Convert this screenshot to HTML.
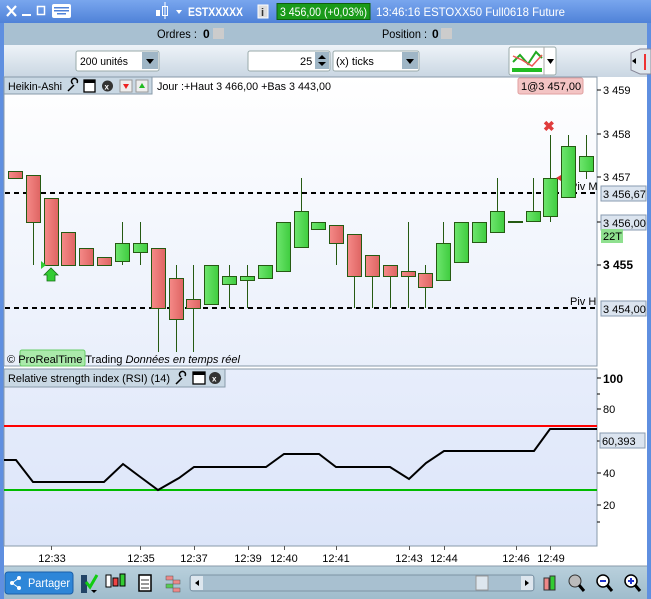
<!DOCTYPE html>
<html><head><meta charset="utf-8"><style>
*{margin:0;padding:0;box-sizing:border-box}
body{width:651px;height:599px;overflow:hidden;font-family:"Liberation Sans",sans-serif;font-size:11px;background:#fff;position:relative}
.abs{position:absolute}
</style></head><body>
<svg class="abs" style="left:0;top:0" width="651" height="599" xmlns="http://www.w3.org/2000/svg" font-family="Liberation Sans, sans-serif">
<defs>
<linearGradient id="top" x1="0" y1="0" x2="0" y2="1"><stop offset="0" stop-color="#79a6ee"/><stop offset="1" stop-color="#4f82d8"/></linearGradient>
<linearGradient id="r3" x1="0" y1="0" x2="0" y2="1"><stop offset="0" stop-color="#eef3f8"/><stop offset="1" stop-color="#c9d6e2"/></linearGradient>
<linearGradient id="plot" x1="0" y1="0" x2="0" y2="1"><stop offset="0" stop-color="#ffffff"/><stop offset="1" stop-color="#e9effb"/></linearGradient>
<linearGradient id="rsi" x1="0" y1="0" x2="0" y2="1"><stop offset="0" stop-color="#e7edfb"/><stop offset="1" stop-color="#dce5f9"/></linearGradient>
<linearGradient id="rc" x1="0" y1="0" x2="1" y2="0"><stop offset="0" stop-color="#f58a88"/><stop offset="1" stop-color="#de6462"/></linearGradient>
<linearGradient id="gc" x1="0" y1="0" x2="1" y2="0"><stop offset="0" stop-color="#6ee66e"/><stop offset="1" stop-color="#3fcc3f"/></linearGradient>
<linearGradient id="bot" x1="0" y1="0" x2="0" y2="1"><stop offset="0" stop-color="#b9d0dc"/><stop offset="1" stop-color="#9fbccc"/></linearGradient>
</defs>
<!-- top bar -->
<rect x="0" y="0" width="651" height="23" fill="url(#top)"/>
<path d="M7 6 L16 16 M16 6 L7 16" stroke="#fff" stroke-width="2.2"/>
<rect x="22" y="14" width="9" height="2" fill="#fff"/>
<rect x="37.5" y="6.5" width="7" height="8" fill="none" stroke="#fff" stroke-width="1.5"/>
<rect x="52" y="4" width="19" height="14" rx="2" fill="#fff"/>
<g fill="#4f82d8"><rect x="54" y="7" width="15" height="1.5"/><rect x="54" y="10" width="15" height="1.5"/><rect x="57" y="13" width="9" height="1.5"/></g>
<rect x="156" y="10" width="4" height="6" fill="#fff"/><rect x="162.5" y="6.5" width="5" height="9" fill="none" stroke="#fff"/><line x1="165" y1="2" x2="165" y2="19" stroke="#fff"/>
<path d="M176 10 L182 10 L179 14Z" fill="#fff"/>
<text x="188" y="16" font-size="12" font-weight="bold" fill="#fff" textLength="55" lengthAdjust="spacingAndGlyphs">ESTXXXXX</text>
<rect x="258" y="5" width="10" height="13" fill="#ddd" stroke="#fff"/><text x="261" y="16" font-size="11" font-weight="bold" fill="#333">i</text>
<rect x="277" y="3.5" width="93" height="16" fill="#1a9a1a" stroke="#0d5f0d"/>
<text x="280" y="16" font-size="12" fill="#fff" textLength="87" lengthAdjust="spacingAndGlyphs">3 456,00 (+0,03%)</text>
<text x="376" y="16" font-size="12" fill="#fff" textLength="189" lengthAdjust="spacingAndGlyphs">13:46:16 ESTOXX50 Full0618 Future</text>
<!-- row2 -->
<rect x="0" y="23" width="651" height="22" fill="#a8c0d1"/>
<rect x="0" y="23" width="4" height="576" fill="#5f8fe0"/>
<rect x="647" y="23" width="4" height="576" fill="#5f8fe0"/>
<text x="157" y="38" font-size="12" fill="#000" textLength="40" lengthAdjust="spacingAndGlyphs">Ordres :</text><text x="203" y="38" font-size="12" font-weight="bold">0</text>
<rect x="213" y="28" width="11" height="11" fill="#ccc"/>
<text x="382" y="38" font-size="12" fill="#000" textLength="45" lengthAdjust="spacingAndGlyphs">Position :</text><text x="432" y="38" font-size="12" font-weight="bold">0</text>
<rect x="441" y="28" width="11" height="11" fill="#ccc"/>
<!-- row3 -->
<rect x="4" y="45" width="643" height="32" fill="url(#r3)"/>
<rect x="76" y="51" width="83" height="20" rx="2" fill="#fff" stroke="#9aa"/>
<text x="80" y="65" font-size="11" textLength="48" lengthAdjust="spacingAndGlyphs">200 unités</text>
<rect x="142" y="52" width="16" height="17" fill="#9fb6c6"/><path d="M146 59 L154 59 L150 64Z" fill="#000"/>
<rect x="248" y="51" width="82" height="20" rx="2" fill="#fff" stroke="#9aa"/>
<text x="300" y="65" font-size="11">25</text>
<rect x="315" y="52" width="14" height="17" fill="#9fb6c6"/><path d="M318 59 L326 59 L322 55Z M318 62 L326 62 L322 66Z" fill="#000"/>
<rect x="333" y="51" width="86" height="20" rx="2" fill="#fff" stroke="#9aa"/>
<text x="336" y="65" font-size="11">(x) ticks</text>
<rect x="402" y="52" width="16" height="17" fill="#9fb6c6"/><path d="M406 59 L414 59 L410 64Z" fill="#000"/>
<rect x="509" y="47" width="47" height="28" rx="2" fill="#fff" stroke="#9aa"/>
<line x1="544" y1="47" x2="544" y2="75" stroke="#aaa"/>
<path d="M513 62 L520 55 L528 64 L536 52 L542 58" stroke="#2a2" stroke-width="2" fill="none"/>
<path d="M513 56 L522 60 L532 66 L542 55" stroke="#e55" stroke-width="1.5" fill="none"/>
<rect x="512" y="68" width="30" height="4" fill="#2b2"/>
<path d="M547 59 L554 59 L550.5 64Z" fill="#000"/>
<path d="M640 49 L631 53 L631 70 L640 74 L651 74 L651 49Z" fill="#dfe7ee" stroke="#889"/>
<path d="M645 54 L645 70" stroke="#e33" stroke-width="2"/><path d="M632 61 L636 58 L636 64Z" fill="#000"/>
<!-- main plot -->
<rect x="4" y="77" width="593" height="289" fill="url(#plot)" stroke="#889aaa"/>
<rect x="597" y="77" width="50" height="289" fill="#fff"/>
<line x1="597" y1="77" x2="597" y2="366" stroke="#889aaa"/>
<rect x="4" y="77" width="148" height="17" fill="#c9d8e4" stroke="#889aaa"/>
<text x="8" y="90" font-size="11" textLength="54" lengthAdjust="spacingAndGlyphs">Heikin-Ashi</text>
<path d="M68 91 L74 85 M73 84 a3 3 0 1 1 4 -1" stroke="#000" stroke-width="1.5" fill="none"/>
<rect x="84" y="80" width="11" height="12" fill="#fff" stroke="#000" stroke-width="1.3"/><rect x="84" y="80" width="11" height="3" fill="#000"/>
<circle cx="107.5" cy="86" r="5.5" fill="#333"/><text x="104.5" y="89.5" font-size="8" fill="#fff" font-weight="bold">x</text>
<rect x="120" y="80" width="12" height="12" fill="#eee" stroke="#999"/><path d="M123 84 L129 84 L126 89Z" fill="#e22"/>
<rect x="136" y="80" width="12" height="12" fill="#eee" stroke="#999"/><path d="M139 88 L145 88 L142 83Z" fill="#2b2"/>
<text x="157" y="90" font-size="11" textLength="174" lengthAdjust="spacingAndGlyphs">Jour :+Haut 3 466,00 +Bas 3 443,00</text>
<rect x="518" y="78" width="65" height="16" rx="2" fill="#f3c4c4" stroke="#e0a0a0"/>
<text x="521" y="90" font-size="11">1@3 457,00</text>
<!-- price axis -->
<g font-size="11" fill="#000">
<line x1="597" y1="90" x2="601" y2="90" stroke="#000"/><text x="603" y="94">3 459</text>
<line x1="597" y1="134" x2="601" y2="134" stroke="#000"/><text x="603" y="138">3 458</text>
<line x1="597" y1="177" x2="601" y2="177" stroke="#000"/><text x="603" y="181">3 457</text>
<line x1="597" y1="222" x2="601" y2="222" stroke="#000"/>
<line x1="597" y1="265" x2="601" y2="265" stroke="#000"/><text x="603" y="269" font-weight="bold" font-size="12">3 455</text>
</g>
<rect x="601" y="186" width="45" height="15" fill="#dbe4ef" stroke="#8a9bb0"/><text x="603" y="198" font-size="11">3 456,67</text>
<rect x="601" y="215" width="45" height="15" fill="#dbe4ef" stroke="#8a9bb0"/><text x="603" y="227" font-size="11">3 456,00</text>
<rect x="601" y="229" width="22" height="14" fill="#8fe08f"/><text x="603" y="240" font-size="11">22T</text>
<rect x="601" y="301" width="45" height="15" fill="#dbe4ef" stroke="#8a9bb0"/><text x="603" y="313" font-size="11">3 454,00</text>
<!-- dashed -->
<line x1="5" y1="193" x2="597" y2="193" stroke="#000" stroke-width="2" stroke-dasharray="5,4"/>
<line x1="5" y1="308" x2="597" y2="308" stroke="#000" stroke-width="2" stroke-dasharray="5,4"/>
<text x="570" y="190" font-size="11">Piv M</text>
<text x="570" y="305" font-size="11">Piv H</text>
<!-- candles -->
<g stroke="#255a12" stroke-width="1">
<line x1="33.5" y1="222" x2="33.5" y2="265"/>
<line x1="158.5" y1="308" x2="158.5" y2="352"/>
<line x1="176.5" y1="265" x2="176.5" y2="352"/>
<line x1="193.5" y1="265" x2="193.5" y2="352"/>
<line x1="122.5" y1="222" x2="122.5" y2="265"/>
<line x1="140.5" y1="222" x2="140.5" y2="265"/>
<line x1="229.5" y1="265" x2="229.5" y2="308"/>
<line x1="247.5" y1="265" x2="247.5" y2="308"/>
<line x1="301.5" y1="178" x2="301.5" y2="211"/>
<line x1="336.5" y1="225" x2="336.5" y2="265"/>
<line x1="354.5" y1="234" x2="354.5" y2="308"/>
<line x1="372.5" y1="255" x2="372.5" y2="308"/>
<line x1="390.5" y1="265" x2="390.5" y2="308"/>
<line x1="408.5" y1="222" x2="408.5" y2="308"/>
<line x1="425.5" y1="265" x2="425.5" y2="308"/>
<line x1="443.5" y1="222" x2="443.5" y2="243"/>
<line x1="497.5" y1="178" x2="497.5" y2="211"/>
<line x1="533.5" y1="178" x2="533.5" y2="222"/>
<line x1="550.5" y1="135" x2="550.5" y2="222"/>
<line x1="568.5" y1="135" x2="568.5" y2="146"/>
<line x1="586.5" y1="135" x2="586.5" y2="179"/>
</g>
<g stroke="#255a12" stroke-width="1" fill="url(#rc)">
<rect x="8.5" y="171.5" width="14" height="7"/>
<rect x="26.5" y="175.5" width="14" height="47"/>
<rect x="44.5" y="198.5" width="14" height="67"/>
<rect x="61.5" y="232.5" width="14" height="33"/>
<rect x="79.5" y="248.5" width="14" height="17"/>
<rect x="97.5" y="257.5" width="14" height="8"/>
<rect x="151.5" y="248.5" width="14" height="60"/>
<rect x="169.5" y="278.5" width="14" height="41"/>
<rect x="186.5" y="299.5" width="14" height="9"/>
<rect x="329.5" y="225.5" width="14" height="18"/>
<rect x="347.5" y="234.5" width="14" height="42"/>
<rect x="365.5" y="255.5" width="14" height="21"/>
<rect x="383.5" y="265.5" width="14" height="11"/>
<rect x="401.5" y="271.5" width="14" height="5"/>
<rect x="418.5" y="273.5" width="14" height="14"/>
</g>
<g stroke="#255a12" stroke-width="1" fill="url(#gc)">
<rect x="115.5" y="243.5" width="14" height="18"/>
<rect x="133.5" y="243.5" width="14" height="9"/>
<rect x="204.5" y="265.5" width="14" height="39"/>
<rect x="222.5" y="276.5" width="14" height="8"/>
<rect x="240.5" y="276.5" width="14" height="4"/>
<rect x="258.5" y="265.5" width="14" height="13"/>
<rect x="276.5" y="222.5" width="14" height="49"/>
<rect x="294.5" y="211.5" width="14" height="36"/>
<rect x="311.5" y="222.5" width="14" height="7"/>
<rect x="436.5" y="243.5" width="14" height="37"/>
<rect x="454.5" y="222.5" width="14" height="40"/>
<rect x="472.5" y="222.5" width="14" height="20"/>
<rect x="490.5" y="211.5" width="14" height="21"/>
<rect x="508.5" y="221.5" width="14" height="1"/>
<rect x="526.5" y="211.5" width="14" height="10"/>
<rect x="543.5" y="178.5" width="14" height="38"/>
<rect x="561.5" y="146.5" width="14" height="51"/>
<rect x="579.5" y="156.5" width="14" height="15"/>
</g>
<path d="M47 281 L47 275 L44 275 L51 268 L58 275 L55 275 L55 281Z" fill="#3c3" stroke="#187018" stroke-width="0.8"/>
<path d="M41 261 L46 265 L41 269Z" fill="#3c3"/>
<text x="543" y="131" font-size="14" font-weight="bold" fill="#e03c3c">✖</text>
<path d="M561 175 L556 178 L561 181Z" fill="#d33"/>
<rect x="20" y="350" width="65" height="16" rx="2" fill="#aaeaaa" stroke="#6c6"/>
<text x="7" y="363" font-size="11" fill="#000" textLength="233" lengthAdjust="spacingAndGlyphs">© ProRealTime Trading <tspan font-style="italic">Données en temps réel</tspan></text>
<!-- RSI panel -->
<rect x="4" y="369" width="593" height="177" fill="url(#rsi)" stroke="#889aaa"/>
<rect x="597" y="369" width="50" height="177" fill="#fff"/>
<line x1="597" y1="369" x2="597" y2="546" stroke="#889aaa"/>
<rect x="4" y="369" width="221" height="18" fill="#c9d8e4" stroke="#889aaa"/>
<text x="8" y="382" font-size="11" textLength="162" lengthAdjust="spacingAndGlyphs">Relative strength index (RSI) (14)</text>
<path d="M176 384 L182 378 M181 377 a3 3 0 1 1 4 -1" stroke="#000" stroke-width="1.5" fill="none"/>
<rect x="193" y="372" width="12" height="12" fill="#fff" stroke="#000" stroke-width="1.3"/><rect x="193" y="372" width="12" height="3" fill="#000"/>
<circle cx="215" cy="378" r="6" fill="#333"/><text x="212" y="381.5" font-size="8" fill="#fff" font-weight="bold">x</text>
<line x1="4" y1="426" x2="597" y2="426" stroke="#f00" stroke-width="2"/>
<line x1="4" y1="490" x2="597" y2="490" stroke="#0b0" stroke-width="2"/>
<polyline points="4,460 16,460 33,482 104,482 123,464 139,476 158,490 179,478 194,467 266,467 284,454 319,454 336,467 390,467 409,479 426,463 444,451 534,451 550,429 597,429" fill="none" stroke="#000" stroke-width="2"/>
<g font-size="11"><text x="603" y="383" font-weight="bold" font-size="12">100</text><text x="603" y="413">80</text><text x="603" y="477">40</text><text x="603" y="509">20</text>
<line x1="597" y1="378" x2="601" y2="378" stroke="#000"/><line x1="597" y1="394" x2="600" y2="394" stroke="#000"/><line x1="597" y1="409" x2="601" y2="409" stroke="#000"/><line x1="597" y1="441" x2="601" y2="441" stroke="#000"/><line x1="597" y1="473" x2="601" y2="473" stroke="#000"/><line x1="597" y1="505" x2="601" y2="505" stroke="#000"/><line x1="597" y1="522" x2="600" y2="522" stroke="#000"/></g>
<rect x="600" y="433" width="45" height="15" fill="#dbe4ef" stroke="#8a9bb0"/><text x="602" y="445" font-size="11">60,393</text>
<!-- time axis -->
<g font-size="11" text-anchor="middle" stroke-width="1">
<g stroke="#555"><line x1="51.5" y1="546" x2="51.5" y2="550"/><line x1="140.5" y1="546" x2="140.5" y2="550"/><line x1="194.5" y1="546" x2="194.5" y2="550"/><line x1="248.5" y1="546" x2="248.5" y2="550"/><line x1="284.5" y1="546" x2="284.5" y2="550"/><line x1="336.5" y1="546" x2="336.5" y2="550"/><line x1="409.5" y1="546" x2="409.5" y2="550"/><line x1="444.5" y1="546" x2="444.5" y2="550"/><line x1="516.5" y1="546" x2="516.5" y2="550"/><line x1="550.5" y1="546" x2="550.5" y2="550"/></g>
<text x="52" y="562">12:33</text><text x="141" y="562">12:35</text><text x="194" y="562">12:37</text><text x="248" y="562">12:39</text><text x="284" y="562">12:40</text><text x="336" y="562">12:41</text><text x="409" y="562">12:43</text><text x="444" y="562">12:44</text><text x="516" y="562">12:46</text><text x="551" y="562">12:49</text>
</g>
<!-- bottom toolbar -->
<rect x="4" y="566" width="643" height="33" fill="url(#bot)"/>
<line x1="4" y1="566" x2="647" y2="566" stroke="#889aaa"/>
<rect x="5" y="572" width="68" height="22" rx="3" fill="#2e86d8" stroke="#1a5fa8"/>
<circle cx="12" cy="583" r="2" fill="#fff"/><circle cx="19" cy="578" r="2" fill="#fff"/><circle cx="19" cy="588" r="2" fill="#fff"/>
<path d="M12 583 L19 578 M12 583 L19 588" stroke="#fff"/>
<text x="28" y="587" font-size="12" fill="#fff" textLength="42" lengthAdjust="spacingAndGlyphs">Partager</text>
<rect x="81" y="575" width="6" height="18" fill="#246"/><path d="M86 582 L90 587 L97 575" stroke="#1c1" stroke-width="3" fill="none"/><path d="M91 590 L97 590 L94 593Z" fill="#000"/>
<rect x="106" y="575" width="5" height="12" fill="#fff" stroke="#000"/><rect x="113" y="578" width="5" height="8" fill="#e44" stroke="#000"/><rect x="120" y="574" width="5" height="12" fill="#3c3" stroke="#000"/>
<rect x="139" y="575" width="12" height="16" fill="#fff" stroke="#000" stroke-width="1.5"/>
<path d="M141 580 L149 580 M141 584 L149 584 M141 588 L149 588" stroke="#333"/>
<g fill="#e88" stroke="#555" stroke-width="0.5"><rect x="166" y="576" width="7" height="4"/><rect x="173" y="580" width="7" height="4"/><rect x="166" y="584" width="7" height="4" fill="#5c5"/><rect x="173" y="588" width="7" height="4"/></g>
<rect x="190" y="575" width="344" height="16" rx="3" fill="#a8c0d0" stroke="#7d93a5"/>
<rect x="191" y="576" width="12" height="14" fill="#dde6ee"/><path d="M199 580 L195 583 L199 586Z" fill="#000"/>
<rect x="476" y="576" width="12" height="14" fill="#dde6ee" stroke="#999"/>
<rect x="521" y="576" width="12" height="14" fill="#dde6ee"/><path d="M525 580 L529 583 L525 586Z" fill="#000"/>
<rect x="544" y="578" width="5" height="12" fill="#e88" stroke="#333"/><rect x="550" y="576" width="5" height="14" fill="#3c3" stroke="#333"/>
<circle cx="575" cy="581" r="6" fill="#bbb" stroke="#333"/><line x1="579" y1="585" x2="584" y2="591" stroke="#000" stroke-width="3"/>
<circle cx="603" cy="581" r="6" fill="#fff" stroke="#000" stroke-width="1.5"/><line x1="607" y1="585" x2="612" y2="591" stroke="#000" stroke-width="3"/><rect x="600" y="580" width="6" height="2" fill="#23c"/>
<circle cx="631" cy="581" r="6" fill="#fff" stroke="#000" stroke-width="1.5"/><line x1="635" y1="585" x2="640" y2="591" stroke="#000" stroke-width="3"/><rect x="628" y="580" width="6" height="2" fill="#23c"/><rect x="630" y="578" width="2" height="6" fill="#23c"/>
</svg>
</body></html>
